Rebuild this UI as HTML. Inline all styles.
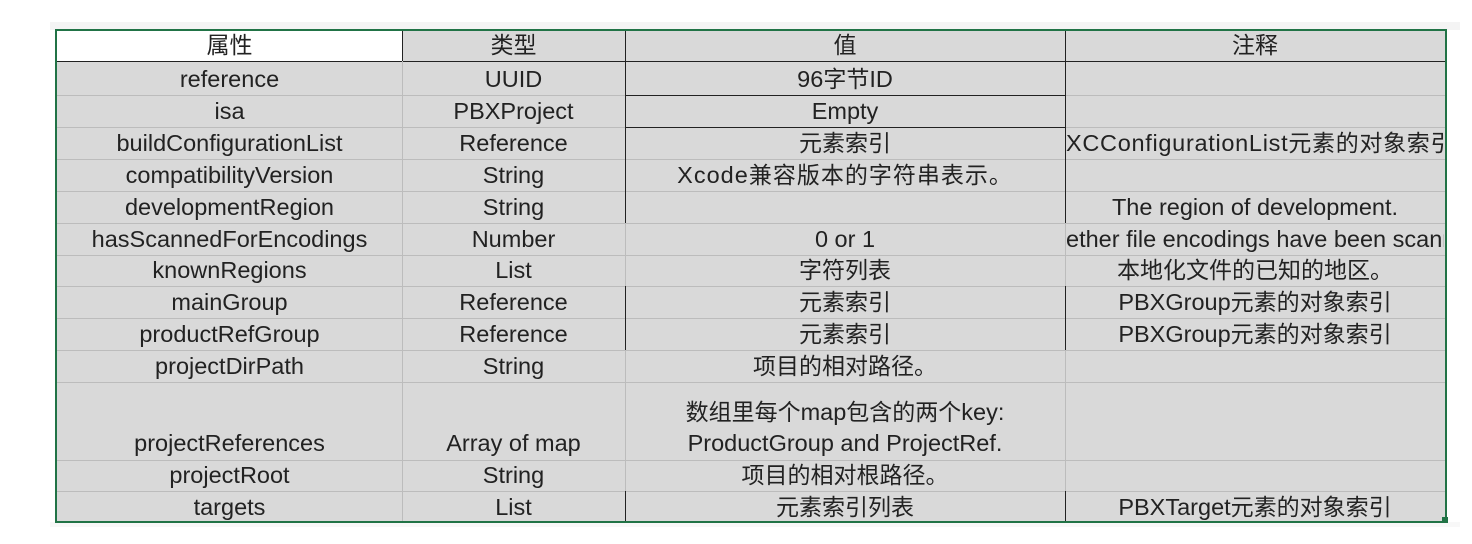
<!DOCTYPE html>
<html><head><meta charset="utf-8"><style>
body{margin:0;width:1472px;height:544px;background:#fff;position:relative;overflow:hidden;font-family:"Liberation Sans","Noto Sans CJK SC",sans-serif;}
.bg{position:absolute;left:57px;top:31px;width:1388px;height:490px;background:#d9d9d9;}
.h{position:absolute;height:1px;background:#bcbcbc;}
.v{position:absolute;width:1px;background:#bcbcbc;}
.k{background:#222!important;}
.t{position:absolute;font-size:23px;color:#222;text-align:center;white-space:nowrap;overflow:hidden;line-height:26px;}
i{font-style:normal;font-size:23.5px;}
</style></head><body>
<div style="position:absolute;left:50px;top:22px;width:1410px;height:8px;background:#f4f4f4"></div>
<div style="position:absolute;left:50px;top:522px;width:1410px;height:5px;background:#f8f8f8"></div>
<div class="bg"></div>
<div style="position:absolute;left:57px;top:31px;width:345px;height:30px;background:#fff"></div>
<div class="h k" style="left:57px;top:61px;width:1388px"></div>
<div class="h" style="left:57px;top:95px;width:1388px"></div>
<div class="h" style="left:57px;top:127px;width:1388px"></div>
<div class="h k" style="left:625px;top:95px;width:440px"></div>
<div class="h k" style="left:625px;top:127px;width:440px"></div>
<div class="h" style="left:57px;top:159px;width:1388px"></div>
<div class="h" style="left:57px;top:191px;width:1388px"></div>
<div class="h" style="left:57px;top:223px;width:1388px"></div>
<div class="h" style="left:57px;top:255px;width:1388px"></div>
<div class="h" style="left:57px;top:286px;width:1388px"></div>
<div class="h" style="left:57px;top:318px;width:1388px"></div>
<div class="h" style="left:57px;top:350px;width:1388px"></div>
<div class="h" style="left:57px;top:382px;width:1388px"></div>
<div class="h" style="left:57px;top:460px;width:1388px"></div>
<div class="h" style="left:57px;top:491px;width:1388px"></div>
<div class="v" style="left:402px;top:31px;height:490px"></div>
<div class="v k" style="left:402px;top:31px;height:30px"></div>
<div class="v" style="left:625px;top:31px;height:490px"></div>
<div class="v k" style="left:625px;top:31px;height:192px"></div>
<div class="v k" style="left:625px;top:286px;height:64px"></div>
<div class="v k" style="left:625px;top:491px;height:30px"></div>
<div class="v" style="left:1065px;top:31px;height:490px"></div>
<div class="v k" style="left:1065px;top:31px;height:192px"></div>
<div class="v k" style="left:1065px;top:286px;height:64px"></div>
<div class="v k" style="left:1065px;top:491px;height:30px"></div>
<div style="position:absolute;left:55px;top:29px;width:1388px;height:490px;border:2px solid #217346"></div>
<div style="position:absolute;left:1442px;top:517px;width:6px;height:6px;background:#217346"></div>

<div class="t" style="left:57px;width:345px;top:32px">属性</div>
<div class="t" style="left:57px;width:345px;top:66px"><i>reference</i></div>
<div class="t" style="left:57px;width:345px;top:98px"><i>isa</i></div>
<div class="t" style="left:57px;width:345px;top:130px"><i>buildConfigurationList</i></div>
<div class="t" style="left:57px;width:345px;top:162px"><i>compatibilityVersion</i></div>
<div class="t" style="left:57px;width:345px;top:194px"><i>developmentRegion</i></div>
<div class="t" style="left:57px;width:345px;top:226px"><i>hasScannedForEncodings</i></div>
<div class="t" style="left:57px;width:345px;top:257px"><i>knownRegions</i></div>
<div class="t" style="left:57px;width:345px;top:289px"><i>mainGroup</i></div>
<div class="t" style="left:57px;width:345px;top:321px"><i>productRefGroup</i></div>
<div class="t" style="left:57px;width:345px;top:353px"><i>projectDirPath</i></div>
<div class="t" style="left:57px;width:345px;top:430px"><i>projectReferences</i></div>
<div class="t" style="left:57px;width:345px;top:462px"><i>projectRoot</i></div>
<div class="t" style="left:57px;width:345px;top:494px"><i>targets</i></div>

<div class="t" style="left:402px;width:223px;top:32px">类型</div>
<div class="t" style="left:402px;width:223px;top:66px"><i>UUID</i></div>
<div class="t" style="left:402px;width:223px;top:98px"><i>PBXProject</i></div>
<div class="t" style="left:402px;width:223px;top:130px"><i>Reference</i></div>
<div class="t" style="left:402px;width:223px;top:162px"><i>String</i></div>
<div class="t" style="left:402px;width:223px;top:194px"><i>String</i></div>
<div class="t" style="left:402px;width:223px;top:226px"><i>Number</i></div>
<div class="t" style="left:402px;width:223px;top:257px"><i>List</i></div>
<div class="t" style="left:402px;width:223px;top:289px"><i>Reference</i></div>
<div class="t" style="left:402px;width:223px;top:321px"><i>Reference</i></div>
<div class="t" style="left:402px;width:223px;top:353px"><i>String</i></div>
<div class="t" style="left:402px;width:223px;top:430px"><i>Array of map</i></div>
<div class="t" style="left:402px;width:223px;top:462px"><i>String</i></div>
<div class="t" style="left:402px;width:223px;top:494px"><i>List</i></div>

<div class="t" style="left:625px;width:440px;top:32px">值</div>
<div class="t" style="left:625px;width:440px;top:66px"><i>96</i>字节<i>ID</i></div>
<div class="t" style="left:625px;width:440px;top:98px"><i>Empty</i></div>
<div class="t" style="left:625px;width:440px;top:130px">元素索引</div>
<div class="t" style="left:625px;width:440px;top:162px;letter-spacing:1px"><i>Xcode</i>兼容版本的字符串表示。</div>
<div class="t" style="left:625px;width:440px;top:226px"><i>0 or 1</i></div>
<div class="t" style="left:625px;width:440px;top:257px">字符列表</div>
<div class="t" style="left:625px;width:440px;top:289px">元素索引</div>
<div class="t" style="left:625px;width:440px;top:321px">元素索引</div>
<div class="t" style="left:625px;width:440px;top:353px">项目的相对路径。</div>
<div class="t" style="left:625px;width:440px;top:399px">数组里每个<i>map</i>包含的两个<i>key:</i></div>
<div class="t" style="left:625px;width:440px;top:430px"><i>ProductGroup and ProjectRef.</i></div>
<div class="t" style="left:625px;width:440px;top:462px">项目的相对根路径。</div>
<div class="t" style="left:625px;width:440px;top:494px">元素索引列表</div>

<div class="t" style="left:1066px;width:378px;top:32px">注释</div>
<div class="t" style="left:1066px;width:378px;top:130px;text-align:left;letter-spacing:0.7px"><i>XCConfigurationList</i>元素的对象索引</div>
<div class="t" style="left:1066px;width:378px;top:194px"><i>The region of development.</i></div>
<div class="t" style="left:1066px;width:378px;top:226px;text-align:left"><i>ether file encodings have been scanned</i></div>
<div class="t" style="left:1066px;width:378px;top:257px">本地化文件的已知的地区。</div>
<div class="t" style="left:1066px;width:378px;top:289px"><i>PBXGroup</i>元素的对象索引</div>
<div class="t" style="left:1066px;width:378px;top:321px"><i>PBXGroup</i>元素的对象索引</div>
<div class="t" style="left:1066px;width:378px;top:494px"><i>PBXTarget</i>元素的对象索引</div>
</body></html>
